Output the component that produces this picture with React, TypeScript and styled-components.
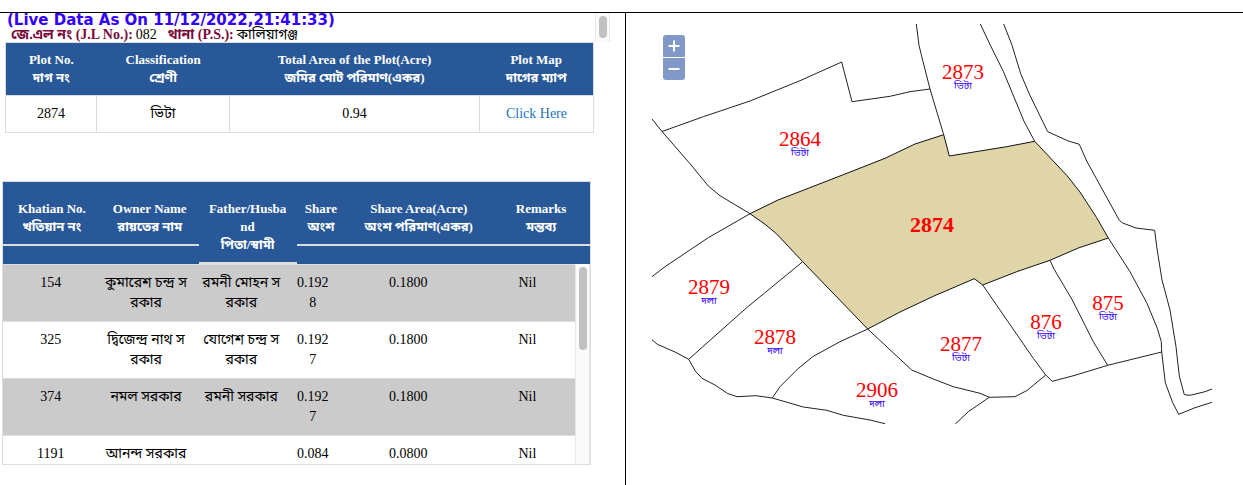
import React from 'react';
import styled, { createGlobalStyle, css } from 'styled-components';

const BLUE = '#285898';
const LINE = '#dddddd';

const GlobalStyle = createGlobalStyle`
  *, *::before, *::after { box-sizing: border-box; }
  body {
    margin: 0;
    background: #fff;
    color: #000;
    font-family: "Liberation Serif", "Noto Sans Bengali", "Noto Sans", serif;
    font-size: 14px;
    line-height: 20px;
  }
`;

const Page = styled.div`
  display: flex;
  flex-direction: column;
  min-height: 100vh;
  padding-top: 12px;
`;

const Split = styled.main`
  flex: 1;
  display: grid;
  grid-template-columns: 626fr 617fr;
  border-top: 1px solid #000;
`;

const RecordsPane = styled.section`
  min-width: 0;
  padding-right: 15px;
  border-right: 1px solid #000;
`;

const MapPane = styled.section`
  min-width: 0;
  padding: 11px 31px 16px 26px;
`;

const Summary = styled.header`
  display: flex;
  justify-content: space-between;
  height: 29px;
  overflow: hidden;
`;

const SummaryText = styled.div`
  padding-left: 7px;
  white-space: nowrap;
`;

const LiveStamp = styled.h1`
  margin: 0;
  color: #3300ff;
  font: bold 15px/14px "DejaVu Sans", sans-serif;
`;

const Facts = styled.p`
  margin: 0 0 0 4px;
  line-height: 15px;
`;

const FactName = styled.strong`
  color: #7a0a3c;
`;

const FactValue = styled.span`
  margin: 0 11px 0 3px;
`;

const ScrollTrack = styled.div`
  flex: none;
  width: 15px;
  padding: 3px;
  background: #fafafa;
  border: solid #e8e8e8;
  border-width: 0 1px;
`;

const ScrollThumb = styled.div<{ $length: number }>`
  width: 8px;
  height: ${(p) => p.$length}px;
  border-radius: 4px;
  background: #c1c1c1;
`;

const headText = css`
  color: #fff;
  font-size: 13px;
  font-weight: bold;
  line-height: 18px;
  text-align: center;
`;

const PlotTable = styled.table`
  width: calc(100% - 21px);
  margin: 0 0 48px 5px;
  table-layout: fixed;
  border-collapse: collapse;
  border: 1px solid ${LINE};
`;

const PlotHead = styled.th`
  ${headText}
  padding: 8px;
  background: ${BLUE};
`;

const PlotCell = styled.td`
  padding: 8px;
  border: 1px solid ${LINE};
  text-align: center;
  & + & { border-left-color: #ebebeb; }
`;

const MapLink = styled.a`
  color: #1c74bd;
  text-decoration: none;
`;

const OwnerTable = styled.table`
  display: block;
  width: calc(100% - 21px);
  margin-left: 2px;
  border: 1px solid ${LINE};
`;

const OwnerHead = styled.thead`
  display: block;
  background: ${BLUE};
`;

const rowGrid = css`
  display: grid;
  grid-template-columns: 2fr 2fr 2fr 1fr 3fr 2fr;
`;

const OwnerHeadRow = styled.tr`
  ${rowGrid}
  align-items: start;
`;

const OwnerHeadCell = styled.th`
  ${headText}
  min-width: 0;
  padding: 18px 0 8px;
  border-bottom: 2px solid ${LINE};
`;

const OwnerScroll = styled.tbody`
  display: grid;
  grid-template-columns: minmax(0, 1fr) 15px;
  height: 200px;
  overflow: hidden;
`;

const OwnerRow = styled.tr`
  ${rowGrid}
  grid-column: 1;
  border-top: 1px solid ${LINE};
  &:nth-child(odd) { background: #cbcbcb; }
`;

const OwnerCell = styled.td`
  min-width: 0;
  padding: 8px 0;
  text-align: center;
  white-space: pre-line;
`;

const ScrollRow = styled.tr`
  grid-column: 2;
  grid-row: 1 / span 4;
  display: flex;
`;

const ScrollCell = styled.td`
  display: flex;
  padding: 0;
`;

const MapFrame = styled.div`
  position: relative;
  max-width: 560px;
`;

const MapDrawing = styled.svg`
  display: block;
  width: 100%;
  height: auto;
`;

const ZoomControl = styled.div`
  position: absolute;
  top: 11px;
  left: 11px;
  display: grid;
  gap: 1px;
`;

const ZoomButton = styled.button`
  display: grid;
  place-items: center;
  width: 22px;
  height: 22px;
  padding: 0;
  border: 0;
  background: #8099c8;
  border-radius: 3px 3px 0 0;
  &:last-child { border-radius: 0 0 3px 3px; }
`;

const PlotNumber = styled.text<{ $selected?: boolean }>`
  fill: #f00;
  font-size: ${(p) => (p.$selected ? 22 : 21)}px;
  font-weight: ${(p) => (p.$selected ? 'bold' : 'normal')};
  text-anchor: middle;
`;

const PlotUse = styled.text`
  fill: #3300ff;
  font-size: 10px;
  text-anchor: middle;
`;

const plotHeads = [
  ['Plot No.', 'দাগ নং', '15.5%'],
  ['Classification', 'শ্রেণী', '22.6%'],
  ['Total Area of the Plot(Acre)', 'জমির মোট পরিমাণ(একর)', '42.5%'],
  ['Plot Map', 'দাগের ম্যাপ', '19.4%'],
];

const ownerHeads = [
  ['Khatian No.', 'খতিয়ান নং'],
  ['Owner Name', 'রায়তের নাম'],
  ['Father/Husba', 'nd', 'পিতা/স্বামী'],
  ['Share', 'অংশ'],
  ['Share Area(Acre)', 'অংশ পরিমাণ(একর)'],
  ['Remarks', 'মন্তব্য'],
];

const owners = [
  ['154', 'কুমারেশ চন্দ্র স\nরকার', 'রমনী মোহন স\nরকার', '0.192\n8', '0.1800', 'Nil'],
  ['325', 'দ্বিজেন্দ্র নাথ স\nরকার', 'যোগেশ চন্দ্র স\nরকার', '0.192\n7', '0.1800', 'Nil'],
  ['374', 'নমল সরকার', 'রমনী সরকার', '0.192\n7', '0.1800', 'Nil'],
  ['1191', 'আনন্দ সরকার', '', '0.084', '0.0800', 'Nil'],
];

const boundaries = [
  '652,119 662,131.5 703.3,116.7 750,101 800,80.7 841.7,62 852,101.7 890,96.3 910,91.7 930,89',
  '916.3,24 919,45.3 922.7,60.3 930,89 943.7,134.7',
  '980.3,24 990.7,46 1003.3,71.3 1024,121.3 1034.7,141.3',
  '1108.3,238 1130,271.7 1146.7,302.7 1157.3,328.3 1161.3,341.7 1161.7,352 1165.3,382.7 1172.7,402.7 1178.7,414.3 1195,407.7 1212,402.3',
  '1003.7,24 1011.7,44.3 1020.7,73.7 1029.3,94 1047.7,131.7 1068.3,141 1079.3,144.3 1086.7,161 1119.3,220.3 1122.7,223 1136,228 1154.7,230.3 1156.7,246.7 1162,280 1170,310 1176,346.7 1179.3,376 1184.3,394.7 1190,395.3 1205,391.7 1212,389',
  '662,131.5 690,163.7 708.3,186 720,195.7 750,213.7',
  '750,213.7 708.3,237.7 665,266.7 652,276.7',
  '802.7,261.7 746.7,307.7 688.7,359.3',
  '652,339.7 657.3,344.3 675,352 688.7,359.3 695.3,371 702,378.3 715,385 727.3,393.3 737,396.7 756,395.7 772.3,398 803.3,407 826.7,410.3 843.3,415.3 870,420 885,423.7',
  '867.7,329 840,341.7 812.7,356.7 797.7,369 780,386.7 772.3,398',
  '867.7,329 911.7,370 933.3,379 953.3,386.7 980,393.3 989.3,397.3 1015,396.7 1027.3,390.3 1045.7,375',
  '989.3,397.3 968.3,411.7 955.3,424',
  '982.7,285 1033.3,358.3 1045.7,375 1052.3,381.3 1075,375.3 1107.7,365.3 1161.7,352',
  '1050,260.3 1054,269 1072.3,300 1093.3,341.7 1107.7,365.3',
];

const selectedPlot =
  '750,213.7 777.3,200.3 843.3,174.7 885,158.3 915,144 943.7,134.7 949.3,156 1006.7,146.7 1034.7,141.3 1066.7,175.3 1080,192 1096.7,217.7 1108.3,238 1078.3,248 1050,260.3 1016.7,271.7 982.7,285 974.3,278.7 933.3,296.3 900,312 867.7,329 802.7,261.7 776.7,234 765,224.3';

const plots = [
  { no: '2873', use: 'ভিটা', x: 963, y: 79 },
  { no: '2864', use: 'ভিটা', x: 800, y: 146 },
  { no: '2879', use: 'দলা', x: 709, y: 294 },
  { no: '2878', use: 'দলা', x: 775, y: 344 },
  { no: '2906', use: 'দলা', x: 877, y: 397 },
  { no: '2877', use: 'ভিটা', x: 961, y: 351 },
  { no: '876', use: 'ভিটা', x: 1046, y: 329 },
  { no: '875', use: 'ভিটা', x: 1108, y: 310 },
];

const Lines = ({ of }: { of: string[] }) => (
  <>
    {of.map((line, i) => (
      <React.Fragment key={line}>
        {i > 0 && <br />}
        {line}
      </React.Fragment>
    ))}
  </>
);

export default function App() {
  return (
    <Page>
      <GlobalStyle />
      <Split>
        <RecordsPane>
          <Summary>
            <SummaryText>
              <LiveStamp>(Live Data As On 11/12/2022,21:41:33)</LiveStamp>
              <Facts>
                <FactName>জে.এল নং (J.L No.):</FactName>
                <FactValue>082</FactValue>
                <FactName>থানা (P.S.):</FactName>
                <FactValue>কালিয়াগঞ্জ</FactValue>
              </Facts>
            </SummaryText>
            <ScrollTrack>
              <ScrollThumb $length={22} />
            </ScrollTrack>
          </Summary>

          <PlotTable>
            <colgroup>
              {plotHeads.map(([en, , width]) => (
                <col key={en} width={width} />
              ))}
            </colgroup>
            <thead>
              <tr>
                {plotHeads.map(([en, bn]) => (
                  <PlotHead key={en} scope="col">
                    <Lines of={[en, bn]} />
                  </PlotHead>
                ))}
              </tr>
            </thead>
            <tbody>
              <tr>
                <PlotCell>2874</PlotCell>
                <PlotCell>ভিটা</PlotCell>
                <PlotCell>0.94</PlotCell>
                <PlotCell>
                  <MapLink href="#map">Click Here</MapLink>
                </PlotCell>
              </tr>
            </tbody>
          </PlotTable>

          <OwnerTable>
            <OwnerHead>
              <OwnerHeadRow>
                {ownerHeads.map((lines) => (
                  <OwnerHeadCell key={lines[0]} scope="col">
                    <Lines of={lines} />
                  </OwnerHeadCell>
                ))}
              </OwnerHeadRow>
            </OwnerHead>
            <OwnerScroll>
              {owners.map((row) => (
                <OwnerRow key={row[0]}>
                  {row.map((value, i) => (
                    <OwnerCell key={i}>{value}</OwnerCell>
                  ))}
                </OwnerRow>
              ))}
              <ScrollRow aria-hidden="true">
                <ScrollCell>
                  <ScrollTrack>
                    <ScrollThumb $length={83} />
                  </ScrollTrack>
                </ScrollCell>
              </ScrollRow>
            </OwnerScroll>
          </OwnerTable>
        </RecordsPane>

        <MapPane id="map">
          <MapFrame>
            <MapDrawing viewBox="652 24 560 400" role="img" aria-label="Plot map">
              <polygon points={selectedPlot} fill="#e0d5a8" stroke="#111" />
              <g fill="none" stroke="#222" strokeWidth="1">
                {boundaries.map((points) => (
                  <polyline key={points} points={points} />
                ))}
              </g>
              {plots.map((p) => (
                <g key={p.no}>
                  <PlotNumber x={p.x} y={p.y}>{p.no}</PlotNumber>
                  <PlotUse x={p.x} y={p.y + 10}>{p.use}</PlotUse>
                </g>
              ))}
              <PlotNumber $selected x={932} y={232}>2874</PlotNumber>
            </MapDrawing>
            <ZoomControl>
              <ZoomButton type="button" aria-label="Zoom in">
                <svg width="12" height="12" viewBox="0 0 12 12" stroke="#fff" strokeWidth="2">
                  <path d="M0.5 6h11M6 0.5v11" />
                </svg>
              </ZoomButton>
              <ZoomButton type="button" aria-label="Zoom out">
                <svg width="12" height="12" viewBox="0 0 12 12" stroke="#fff" strokeWidth="2">
                  <path d="M0.5 6h11" />
                </svg>
              </ZoomButton>
            </ZoomControl>
          </MapFrame>
        </MapPane>
      </Split>
    </Page>
  );
}
